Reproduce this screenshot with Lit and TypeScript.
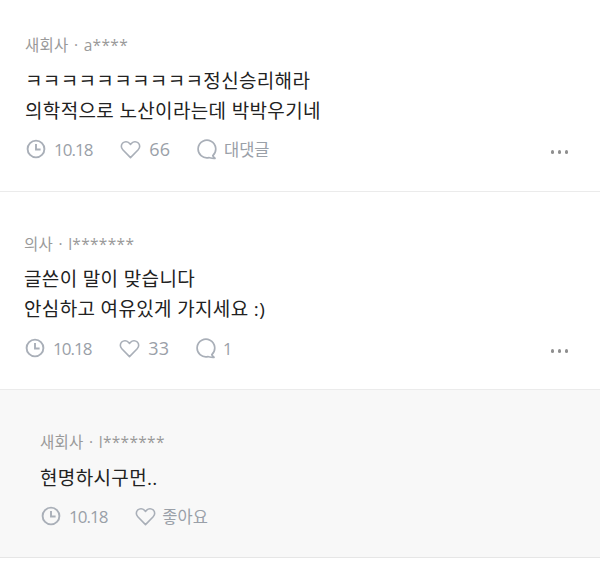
import { LitElement, html, css } from "lit";
import { customElement } from "lit/decorators.js";

const clock = html`<svg class="ic" viewBox="0 0 20 20" width="20" height="20"><circle cx="10" cy="10" r="8.4" fill="none" stroke="#a9afb8" stroke-width="1.9"/><path d="M10 5V10.5H14.6" fill="none" stroke="#a9afb8" stroke-width="1.9"/></svg>`;
const heart = html`<svg class="ic" viewBox="0 0 21 19" width="21" height="19"><path d="M10.5 17.6L2.8 9.8C.8 7.8 .9 4.7 2.7 3 4.6 1.2 7.6 1.3 9.4 3.2L10.5 4.4 11.6 3.2C13.4 1.3 16.4 1.2 18.3 3 20.1 4.7 20.2 7.8 18.2 9.8Z" fill="none" stroke="#a9afb8" stroke-width="1.6" stroke-linejoin="round"/></svg>`;
const bubble = html`<svg class="ic" viewBox="0 0 21 21" width="21" height="21"><path d="M16.8 16.6A8.8 8.8 0 1 0 13 18.6C14.8 19 17 19.6 19 19.3 18 18.6 17.2 17.6 16.8 16.6Z" fill="none" stroke="#a9afb8" stroke-width="1.7" stroke-linejoin="round"/></svg>`;

@customElement("app-root")
export class AppRoot extends LitElement {
  static styles = css`
    :host { display: block; width: 600px; height: 575px; overflow: hidden; background: #fff;
      font-family: "Open Sans", "Noto Sans CJK KR", sans-serif; }
    .c { border-bottom: 1px solid #ebebeb; position: relative; box-sizing: border-box; }
    .one { height: 192px; padding: 34px 25px 0; }
    .two { height: 198px; padding: 41px 24px 0; }
    .three { height: 168px; padding: 41px 40px 0; background: #f8f8f8; border-bottom-color: #e6e6e6; }
    .who { font-size: 15.5px; line-height: 22px; color: #9a9a9a; letter-spacing: 0.3px; white-space: nowrap; word-spacing: 1px; }
    .text { margin-top: 10px; font-size: 19px; line-height: 30px; color: #222; letter-spacing: 0.35px; }
    .two .text { margin-top: 9px; }
    .text div { white-space: nowrap; }
    .meta { margin-top: 11px; display: flex; align-items: center; height: 24px; color: #9aa0a8; font-size: 17px; }
    .two .meta { margin-top: 12px; }
    .item { display: flex; align-items: center; gap: 8px; margin-right: 26px; }
    .date { letter-spacing: -1px; margin-right: 28px; }
    .count { font-size: 18px; }
    .item.k { font-size: 16.5px; gap: 7px; }
    .three .item.k { gap: 6px; }
    .ic { display: block; flex: none; }
    .date .ic { margin-left: 1px; }
    .more { position: absolute; right: 32px; display: flex; gap: 3.5px; margin-top: 6px; }
    .more i { width: 3.5px; height: 3.5px; border-radius: 50%; background: #8f8f8f; display: block; }
  `;
  render() {
    const more = html`<div class="more"><i></i><i></i><i></i></div>`;
    return html`
      <div class="c one">
        <div class="who">새회사 · a****</div>
        <div class="text"><div>ㅋㅋㅋㅋㅋㅋㅋㅋㅋㅋ정신승리해라</div><div>의학적으로 노산이라는데 박박우기네</div></div>
        <div class="meta"><span class="item date">${clock}10.18</span><span class="item count">${heart}66</span><span class="item k">${bubble}대댓글</span>${more}</div>
      </div>
      <div class="c two">
        <div class="who">의사 · l*******</div>
        <div class="text"><div>글쓴이 말이 맞습니다</div><div>안심하고 여유있게 가지세요 :)</div></div>
        <div class="meta"><span class="item date">${clock}10.18</span><span class="item count">${heart}33</span><span class="item k">${bubble}1</span>${more}</div>
      </div>
      <div class="c three">
        <div class="who">새회사 · l*******</div>
        <div class="text"><div>현명하시구먼..</div></div>
        <div class="meta"><span class="item date">${clock}10.18</span><span class="item k">${heart}좋아요</span></div>
      </div>`;
  }
}
